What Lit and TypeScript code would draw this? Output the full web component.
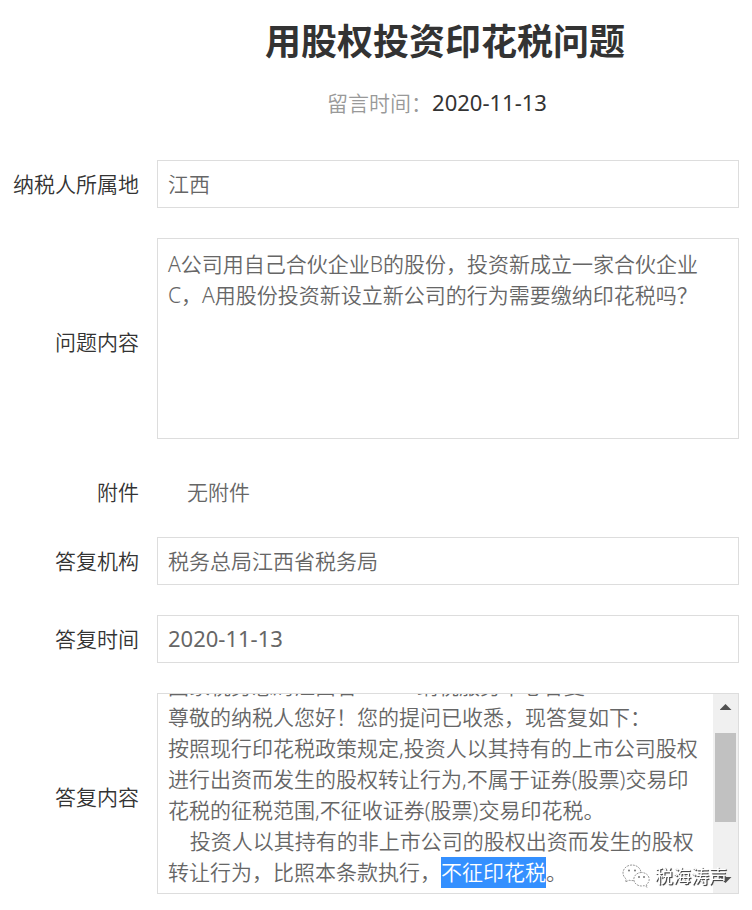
import { LitElement, html, css } from "lit";
import { customElement, query } from "lit/decorators.js";

const QUESTION =
  "A公司用自己合伙企业B的股份，投资新成立一家合伙企业C，A用股份投资新设立新公司的行为需要缴纳印花税吗？";

const ANSWER = [
  "国家税务总局江西省12366纳税服务中心答复",
  "尊敬的纳税人您好！您的提问已收悉，现答复如下：",
  "按照现行印花税政策规定,投资人以其持有的上市公司股权进行出资而发生的股权转让行为,不属于证券(股票)交易印花税的征税范围,不征收证券(股票)交易印花税。",
  "    投资人以其持有的非上市公司的股权出资而发生的股权转让行为，比照本条款执行，不征印花税。",
].join("\n");

const HIGHLIGHT = "不征印花税";

@customElement("app-root")
export class AppRoot extends LitElement {
  static styles = css`
    :host {
      display: block;
      box-sizing: border-box;
      padding: 16px 13px 16px 0;
      background: #fff;
      color: #333;
      font: 350 21px/31px "Noto Sans", "Noto Sans CJK SC", sans-serif;
    }
    *,
    *::before {
      box-sizing: border-box;
    }
    header {
      padding-left: 151px;
      text-align: center;
    }
    h1 {
      margin: 0;
      font-size: 36px;
      line-height: 52px;
      font-weight: 700;
    }
    .meta {
      margin: 19px 0 41px;
      padding-right: 16px;
      color: #999;
    }
    .meta time {
      color: #333;
    }
    time {
      font-size: 22px;
      font-weight: 400;
    }
    .row {
      display: grid;
      grid-template-columns: 139px minmax(0, 1fr);
      column-gap: 18px;
      align-items: center;
      margin-bottom: 30px;
    }
    .row.compact {
      margin-bottom: 20px;
    }
    .label {
      text-align: right;
      white-space: nowrap;
    }
    .tall .label {
      padding-top: 8px;
    }
    .field {
      display: block;
      width: 100%;
      margin: 0;
      border: 1px solid #ddd;
      border-radius: 0;
      background: #fff;
      color: #666;
      outline: none;
    }
    input.field,
    textarea {
      font-family: inherit;
      font-weight: inherit;
      font-size: 21px;
      line-height: 31px;
    }
    input.field {
      height: 48px;
      padding: 0 10px 2px;
    }
    input.date {
      font-size: 22px;
      font-weight: 400;
    }
    textarea {
      height: 201px;
      padding: 10px;
      resize: none;
      scrollbar-width: none;
    }
    .none {
      display: block;
      padding-left: 30px;
      line-height: 46px;
      color: #666;
    }
    .compact {
      padding-bottom: 2px;
    }
    .answer {
      position: relative;
      display: flex;
      height: 201px;
    }
    .answer textarea {
      flex: 1;
      min-width: 0;
      height: 100%;
      padding-bottom: 5px;
      border: 0;
      outline: none;
      color: #666;
      background: #fff;
    }
    .answer textarea::selection {
      background: rgba(51, 144, 255, 0.996);
      color: #fff;
    }
    .scrollbar {
      display: flex;
      flex-direction: column;
      align-items: center;
      flex: 0 0 25px;
      padding: 10px 0;
      background: #f0f0f0;
    }
    .thumb {
      width: 21px;
      height: 89px;
      margin: 23px 0 auto;
      background: #c1c1c1;
    }
    .arrow {
      width: 12px;
      height: 6px;
      background: #505050;
      clip-path: polygon(50% 0, 100% 100%, 0 100%);
    }
    .arrow.down {
      clip-path: polygon(0 0, 100% 0, 50% 100%);
    }
    .watermark {
      position: absolute;
      right: 11px;
      bottom: 1px;
      display: flex;
      align-items: center;
      gap: 5px;
      color: #fff;
      font-size: 18px;
      font-weight: 400;
      pointer-events: none;
      text-shadow: 1px 1px 1px #444, 1px 1px 0 #666;
    }
    .watermark svg {
      display: block;
    }
  `;

  @query("#answer") private answer!: HTMLTextAreaElement;

  protected firstUpdated() {
    const start = ANSWER.lastIndexOf(HIGHLIGHT);
    this.answer.focus({ preventScroll: true });
    this.answer.setSelectionRange(start, start + HIGHLIGHT.length);
    this.answer.scrollTop = this.answer.scrollHeight;
  }

  render() {
    return html`
      <header>
        <h1>用股权投资印花税问题</h1>
        <p class="meta">留言时间：<time datetime="2020-11-13">2020-11-13</time></p>
      </header>
      <main>
        <div class="row">
          <label class="label" for="region">纳税人所属地</label>
          <input class="field" id="region" readonly .value=${"江西"} />
        </div>
        <div class="row tall">
          <label class="label" for="question">问题内容</label>
          <textarea class="field" id="question" readonly spellcheck="false" .value=${QUESTION}></textarea>
        </div>
        <div class="row compact">
          <label class="label" for="files">附件</label>
          <output class="none" id="files">无附件</output>
        </div>
        <div class="row">
          <label class="label" for="agency">答复机构</label>
          <input class="field" id="agency" readonly .value=${"税务总局江西省税务局"} />
        </div>
        <div class="row">
          <label class="label" for="replied">答复时间</label>
          <input class="field date" id="replied" readonly .value=${"2020-11-13"} />
        </div>
        <div class="row tall">
          <label class="label" for="answer">答复内容</label>
          <div class="field answer">
            <textarea id="answer" readonly spellcheck="false" .value=${ANSWER}></textarea>
            <div class="scrollbar" aria-hidden="true">
              <span class="arrow"></span>
              <span class="thumb"></span>
              <span class="arrow down"></span>
            </div>
            <div class="watermark">
              <svg width="28" height="25" viewBox="0 0 28 25" fill="#fff" stroke="#999" stroke-width="1" stroke-dasharray="2 1" aria-hidden="true">
                <path d="M10 1C5 1 1 4.500 1 9c0 2.600 1.300 4.600 3.300 6L3.500 18l3.500-1.800c1 .3 2 .4 3 .4C15 16.600 19 13.500 19 9S15 1 10 1Z" />
                <path d="M19.500 8.500c-4.300 0-7.700 3-7.700 6.800s3.400 6.700 7.700 6.700c1 0 1.900-.1 2.700-.4l3 1.600-.8-2.600c1.800-1.300 2.800-3.100 2.800-5.300 0-3.800-3.400-6.800-7.700-6.800Z" />
                <g fill="#777" stroke="none">
                  <circle cx="7" cy="6.500" r="1" /><circle cx="13" cy="6.500" r="1" />
                  <circle cx="17" cy="13" r="1" /><circle cx="22" cy="13" r="1" />
                </g>
              </svg>
              <span>税海涛声</span>
            </div>
          </div>
        </div>
      </main>
    `;
  }
}
